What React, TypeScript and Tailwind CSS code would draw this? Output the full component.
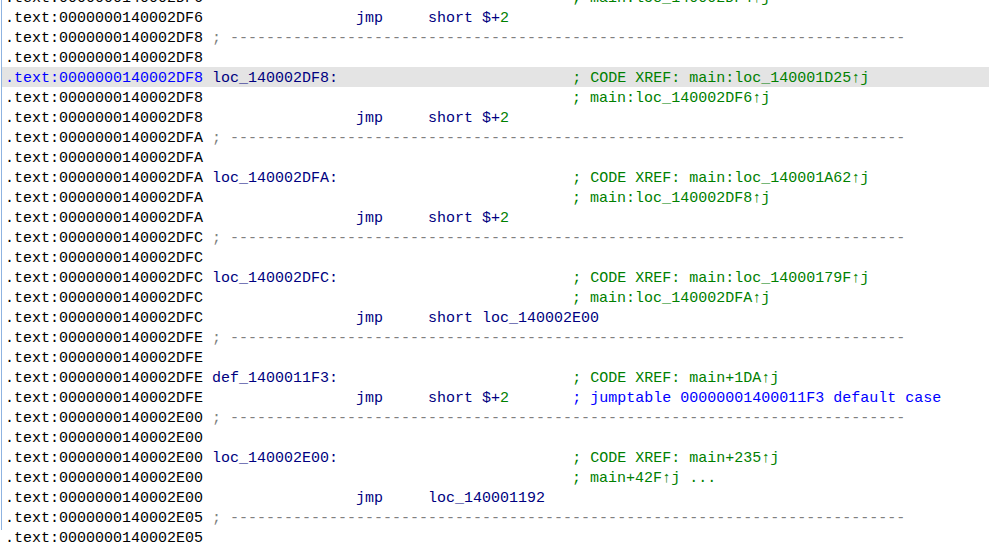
import React from "react";

type Seg = { t: string; c?: string };
type Row = { addr: string; segs: Seg[]; hl?: boolean };

const NAVY = "text-[#000080]";
const GREEN = "text-[#008000]";
const BLUE = "text-[#0000ff]";
const GRAY = "text-[#808080]";

const pad = (s: string, n: number) => s + " ".repeat(Math.max(0, n - s.length));

const dash = (addr: string): Row => ({
  addr,
  segs: [{ t: " ; ", c: GRAY }, { t: "-".repeat(75), c: GRAY }],
});
const blank = (addr: string): Row => ({ addr, segs: [] });
const label = (addr: string, name: string, xref: string, hl = false): Row => ({
  addr,
  hl,
  segs: [
    { t: " " },
    { t: pad(name, 40), c: NAVY },
    { t: "; CODE XREF: " + xref, c: GREEN },
  ],
});
const cont = (addr: string, text: string): Row => ({
  addr,
  segs: [{ t: " ".repeat(41) }, { t: "; " + text, c: GREEN }],
});
const jmpShort2 = (addr: string, extra?: Seg): Row => ({
  addr,
  segs: [
    { t: " ".repeat(17) },
    { t: "jmp     short $+", c: NAVY },
    { t: "2", c: GREEN },
    ...(extra ? [{ t: "       " }, extra] : []),
  ],
});
const jmp = (addr: string, op: string): Row => ({
  addr,
  segs: [{ t: " ".repeat(17) }, { t: "jmp     " + op, c: NAVY }],
});

const A = "0000000140002";
const rows: Row[] = [
  cont(A + "DF6", "main:loc_140002DF4↑j"),
  jmpShort2(A + "DF6"),
  dash(A + "DF8"),
  blank(A + "DF8"),
  label(A + "DF8", "loc_140002DF8:", "main:loc_140001D25↑j", true),
  cont(A + "DF8", "main:loc_140002DF6↑j"),
  jmpShort2(A + "DF8"),
  dash(A + "DFA"),
  blank(A + "DFA"),
  label(A + "DFA", "loc_140002DFA:", "main:loc_140001A62↑j"),
  cont(A + "DFA", "main:loc_140002DF8↑j"),
  jmpShort2(A + "DFA"),
  dash(A + "DFC"),
  blank(A + "DFC"),
  label(A + "DFC", "loc_140002DFC:", "main:loc_14000179F↑j"),
  cont(A + "DFC", "main:loc_140002DFA↑j"),
  jmp(A + "DFC", "short loc_140002E00"),
  dash(A + "DFE"),
  blank(A + "DFE"),
  label(A + "DFE", "def_1400011F3:", "main+1DA↑j"),
  jmpShort2(A + "DFE", { t: "; jumptable 00000001400011F3 default case", c: BLUE }),
  dash(A + "E00"),
  blank(A + "E00"),
  label(A + "E00", "loc_140002E00:", "main+235↑j"),
  cont(A + "E00", "main+42F↑j ..."),
  jmp(A + "E00", "loc_140001192"),
  dash(A + "E05"),
  blank(A + "E05"),
];

export default function App() {
  return (
    <div className="w-[989px] h-[543px] overflow-hidden bg-white">
      <div className="h-full ml-[1px] border-l border-[#8fb3e0]">
        <div
          className="mt-[-13px] text-[15px] leading-[24px] whitespace-pre"
          style={{ fontFamily: '"Liberation Mono", "DejaVu Sans Mono", monospace' }}
        >
          {rows.map((r, i) => (
            <div key={i} className={`h-[20px] pl-[3px] ${r.hl ? "bg-[#e4e4e4]" : ""}`}>
              <span className={r.hl ? BLUE : "text-black"}>{".text:" + r.addr}</span>
              {r.segs.map((s, j) => (
                <span key={j} className={s.c ?? ""}>
                  {s.t}
                </span>
              ))}
            </div>
          ))}
        </div>
      </div>
    </div>
  );
}
